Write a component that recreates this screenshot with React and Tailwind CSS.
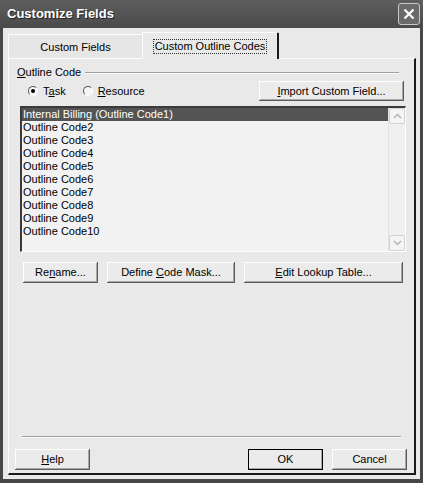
import React from "react";

const btn =
  "flex items-center justify-center bg-[#ebebeb] text-black shadow-[inset_-1px_-1px_#5a5a5a,inset_1px_1px_#ffffff,inset_-2px_-2px_#a8a8a8] text-[11px]";

function U({ children }) {
  return <span className="underline underline-offset-[1px]">{children}</span>;
}

function Radio({ checked }) {
  return (
    <span className="relative inline-block w-[10px] h-[10px] rounded-full border border-t-[#555] border-l-[#555] border-r-[#fff] border-b-[#fff] bg-[#f5f5f5]">
      {checked && (
        <span className="absolute left-[2px] top-[2px] w-[4px] h-[4px] rounded-full bg-black" />
      )}
    </span>
  );
}

function Chevron({ up }) {
  return (
    <svg width="9" height="6" viewBox="0 0 9 6">
      <path
        d={up ? "M1 5 L4.5 1.5 L8 5" : "M1 1 L4.5 4.5 L8 1"}
        fill="none"
        stroke="#b5b5b5"
        strokeWidth="1.5"
      />
    </svg>
  );
}

export default function App() {
  const items = [
    "Internal Billing (Outline Code1)",
    "Outline Code2",
    "Outline Code3",
    "Outline Code4",
    "Outline Code5",
    "Outline Code6",
    "Outline Code7",
    "Outline Code8",
    "Outline Code9",
    "Outline Code10",
  ];
  return (
    <div className="w-[423px] h-[483px] bg-[#474747] flex flex-col font-['Liberation_Sans',Arial,sans-serif] overflow-hidden">
      {/* Title bar */}
      <div className="h-[28px] shrink-0 flex items-center justify-between pl-[7px] pr-[3px] bg-gradient-to-b from-[#5e5e5e] to-[#4a4a4a]">
        <span className="text-white font-bold text-[13px] [text-shadow:1px_1px_#222]">
          Customize Fields
        </span>
        <div className="w-[22px] h-[22px] rounded-[3px] border border-[#c8c8c8] bg-[#6a6a6a] flex items-center justify-center">
          <svg width="12" height="12" viewBox="0 0 12 12">
            <path d="M1.5 1.5 L10.5 10.5 M10.5 1.5 L1.5 10.5" stroke="#ffffff" strokeWidth="2.2" />
          </svg>
        </div>
      </div>

      {/* Body */}
      <div className="flex-1 mx-[3px] mb-[4px] bg-[#e9e9e9] flex flex-col pl-[5px] pr-[4px] pt-[3px] pb-[4px]">
        {/* Tabs */}
        <div className="flex items-end h-[27px] shrink-0">
          <div className="w-[134px] h-[24px] flex items-center justify-center text-[11px] text-black border-l border-t border-[#fcfcfc] bg-[#e6e6e6] pt-[1px]">
            Custom Fields
          </div>
          <div className="relative z-10 w-[137px] h-[27px] -mb-[1px] flex items-center justify-center text-[11px] text-black border-l border-t border-[#fcfcfc] border-r-2 border-r-[#1a1a1a] bg-[#e9e9e9] rounded-tr-[2px]">
            <span className="border border-dotted border-[#333] px-[1px] leading-[13px]">
              Custom Outline Codes
            </span>
          </div>
        </div>

        {/* Panel */}
        <div className="flex-1 flex flex-col border-t border-l border-[#fcfcfc] border-r-2 border-b-2 border-r-[#1a1a1a] border-b-[#1a1a1a] text-[11px] text-black">
          {/* Group label */}
          <div className="flex items-center mt-[7px] pl-[8px] pr-[15px] h-[13px]">
            <span>
              <U>O</U>utline Code
            </span>
            <div className="flex-1 ml-[4px] h-[2px] border-t border-[#a0a0a0] border-b border-b-[#fbfbfb]" />
          </div>

          {/* Radios + import */}
          <div className="flex items-center h-[20px] mt-[2px] pr-[10px]">
            <label className="flex items-center ml-[19px]">
              <Radio checked />
              <span className="ml-[5px]">
                T<U>a</U>sk
              </span>
            </label>
            <label className="flex items-center ml-[17px]">
              <Radio />
              <span className="ml-[5px]">
                <U>R</U>esource
              </span>
            </label>
            <div className="flex-1" />
            <div className={btn + " w-[145px] h-[20px]"}>
              <span>
                <U>I</U>mport Custom Field...
              </span>
            </div>
          </div>

          {/* List */}
          <div className="ml-[11px] mr-[8px] mt-[5px] h-[146px] flex border-t-2 border-l-2 border-t-[#3a3a3a] border-l-[#3a3a3a] border-r border-b border-r-[#fdfdfd] border-b-[#fdfdfd] bg-[#f2f2f2]">
            <div className="flex-1 flex flex-col">
              {items.map((t, i) => (
                <div
                  key={t}
                  className={
                    "h-[13px] leading-[13px] pl-[1px] " +
                    (i === 0 ? "bg-[#545454] text-white" : "text-black")
                  }
                >
                  {t}
                </div>
              ))}
            </div>
            <div className="w-[17px] flex flex-col justify-between bg-[#f0f0f0] border-l border-[#e2e2e2]">
              <div className="h-[16px] flex items-center justify-center rounded-[2px] border border-[#d2d2d2] bg-[#f4f4f4]">
                <Chevron up />
              </div>
              <div className="h-[16px] flex items-center justify-center rounded-[2px] border border-[#d2d2d2] bg-[#f4f4f4]">
                <Chevron />
              </div>
            </div>
          </div>

          {/* Buttons row */}
          <div className="flex items-center mt-[10px] pl-[14px]">
            <div className={btn + " w-[75px] h-[21px]"}>
              <span>
                Re<U>n</U>ame...
              </span>
            </div>
            <div className={btn + " w-[128px] h-[21px] ml-[9px]"}>
              <span>
                Define <U>C</U>ode Mask...
              </span>
            </div>
            <div className={btn + " w-[159px] h-[21px] ml-[9px]"}>
              <span>
                <U>E</U>dit Lookup Table...
              </span>
            </div>
          </div>

          <div className="flex-1" />

          {/* Separator */}
          <div className="mx-[13px] h-[2px] border-t border-[#a0a0a0] border-b border-b-[#fbfbfb]" />

          {/* Bottom buttons */}
          <div className="flex items-center mt-[11px] mb-[3px] pl-[6px] pr-[7px]">
            <div className={btn + " w-[75px] h-[21px]"}>
              <span>
                <U>H</U>elp
              </span>
            </div>
            <div className="flex-1" />
            <div className={btn + " w-[75px] h-[21px] outline outline-1 outline-black -outline-offset-1"}>
              <span>OK</span>
            </div>
            <div className={btn + " w-[75px] h-[21px] ml-[9px]"}>
              <span>Cancel</span>
            </div>
          </div>
        </div>
      </div>
    </div>
  );
}
